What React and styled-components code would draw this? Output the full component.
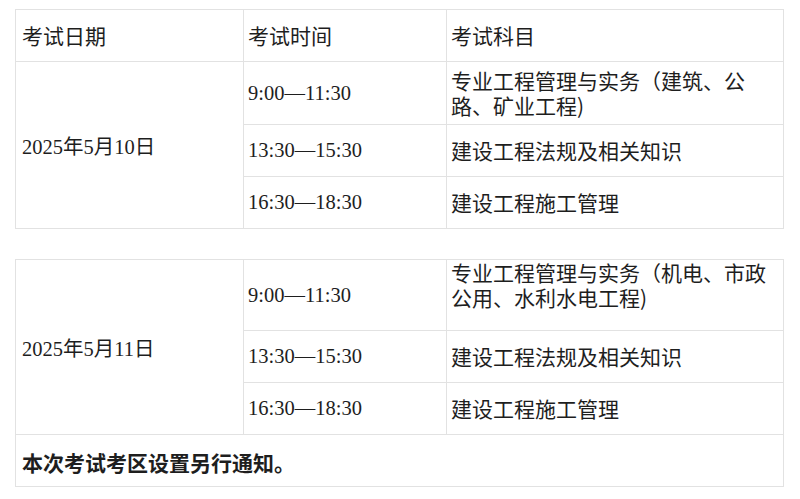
import { Fragment } from "react";
import styled, { createGlobalStyle } from "styled-components";

const GlobalStyle = createGlobalStyle`
  body {
    margin: 0;
    background: #ffffff;
  }
`;

const schedule = [
  {
    date: "2025年5月10日",
    header: true,
    slots: [
      { time: "9:00—11:30", subject: "专业工程管理与实务（建筑、公路、矿业工程)", h: 62 },
      { time: "13:30—15:30", subject: "建设工程法规及相关知识", h: 51 },
      { time: "16:30—18:30", subject: "建设工程施工管理", h: 51 },
    ],
  },
  {
    date: "2025年5月11日",
    note: "本次考试考区设置另行通知。",
    slots: [
      { time: "9:00—11:30", subject: "专业工程管理与实务（机电、市政公用、水利水电工程)", h: 70, top: true },
      { time: "13:30—15:30", subject: "建设工程法规及相关知识", h: 51 },
      { time: "16:30—18:30", subject: "建设工程施工管理", h: 51 },
    ],
  },
];

const Page = styled.div`
  padding: 9px 0 0 15px;
  display: flex;
  flex-direction: column;
  gap: 30px;
`;

const Grid = styled.div`
  display: grid;
  grid-template-columns: 227px 202px 336px;
  grid-template-rows: ${(p) => p.$rows};
  gap: 1px;
  padding: 1px;
  width: 769px;
  box-sizing: border-box;
  background: #e2e2e2;
`;

const Cell = styled.div`
  background: #ffffff;
  color: #1e1e1e;
  display: flex;
  align-items: ${(p) => (p.$top ? "flex-start" : "center")};
  padding: 0 6px 0 ${(p) => p.$left || 4}px;
  box-sizing: border-box;
  font-family: ${(p) =>
    p.$serif
      ? `"Liberation Serif", "Noto Sans CJK SC", serif`
      : `"Noto Sans CJK SC", "Noto Sans", sans-serif`};
  font-size: ${(p) => (p.$serif ? "20.5px" : "21px")};
  line-height: 25px;
  font-weight: ${(p) => (p.$bold ? 700 : 400)};
  grid-column: ${(p) => p.$col || "auto"};
  grid-row: ${(p) => p.$row || "auto"};
`;

const Nudge = styled.span`
  position: relative;
  top: 2px;
`;

function ExamTable({ block }) {
  const rows = [];
  if (block.header) rows.push(51);
  block.slots.forEach((s) => rows.push(s.h));
  if (block.note) rows.push(51);
  const start = block.header ? 2 : 1;

  return (
    <Grid $rows={rows.map((r) => `${r}px`).join(" ")}>
      {block.header && (
        <>
          <Cell $left={6}>考试日期</Cell>
          <Cell>考试时间</Cell>
          <Cell>考试科目</Cell>
        </>
      )}
      <Cell $serif $left={6} $col="1" $row={`${start} / span ${block.slots.length}`}>
        <Nudge>{block.date}</Nudge>
      </Cell>
      {block.slots.map((s, i) => (
        <Fragment key={s.time}>
          <Cell $serif $col="2" $row={`${start + i}`}>
            {s.time}
          </Cell>
          <Cell $top={s.top} $col="3" $row={`${start + i}`}>
            {s.subject}
          </Cell>
        </Fragment>
      ))}
      {block.note && (
        <Cell $bold $left={6} $col="1 / span 3">
          <Nudge>{block.note}</Nudge>
        </Cell>
      )}
    </Grid>
  );
}

export default function App() {
  return (
    <>
      <GlobalStyle />
      <Page>
        {schedule.map((b) => (
          <ExamTable key={b.date} block={b} />
        ))}
      </Page>
    </>
  );
}
